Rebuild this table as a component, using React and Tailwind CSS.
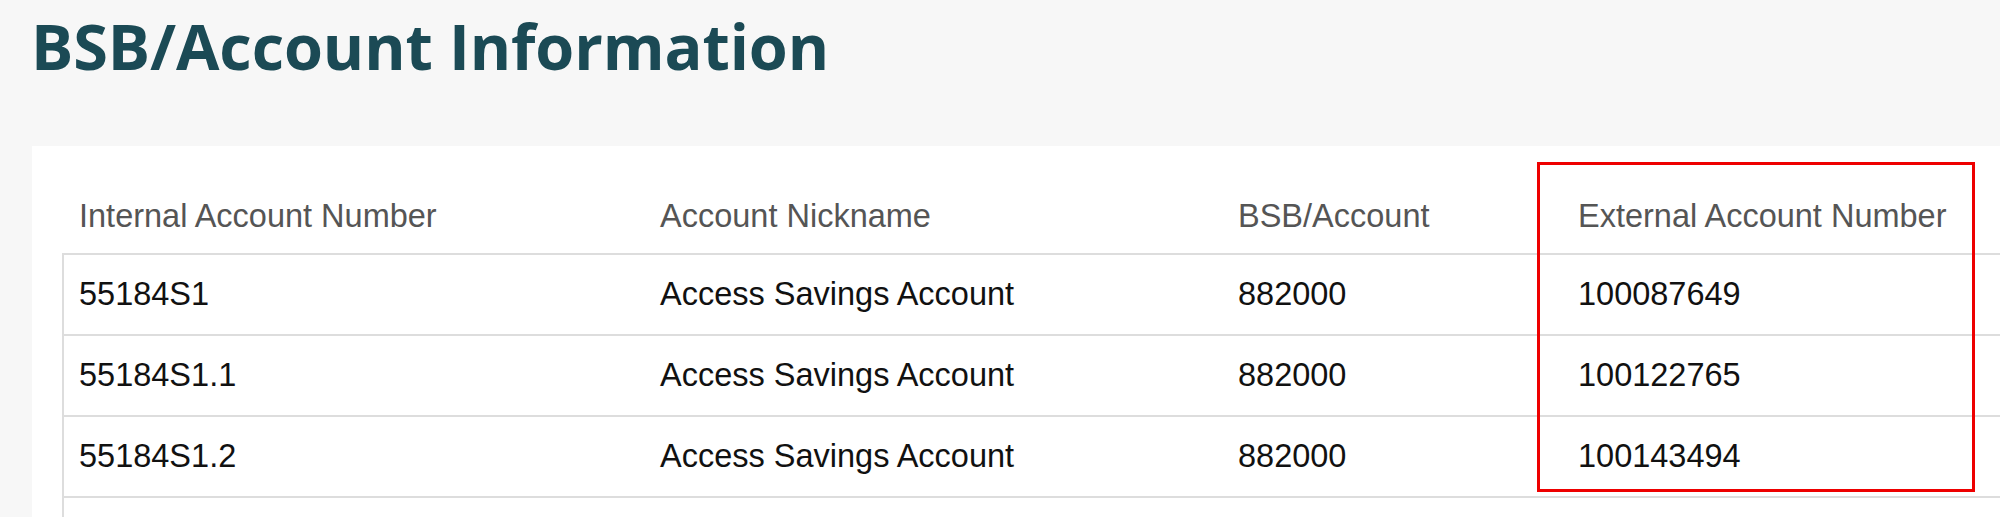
const columns = [
  "Internal Account Number",
  "Account Nickname",
  "BSB/Account",
  "External Account Number",
];

const accounts = [
  { internal: "55184S1", nickname: "Access Savings Account", bsb: "882000", external: "100087649" },
  { internal: "55184S1.1", nickname: "Access Savings Account", bsb: "882000", external: "100122765" },
  { internal: "55184S1.2", nickname: "Access Savings Account", bsb: "882000", external: "100143494" },
];

// column widths follow the original table, last one takes the rest
const gridCols = "grid grid-cols-[581px_578px_340px_1fr]";

export default function App() {
  return (
    <div className="h-[517px] overflow-hidden bg-[#f7f7f7] font-['Liberation_Sans',Arial,sans-serif]">
      {/* Page title */}
      <h1 className="ml-[31px] pt-[14px] h-[146px] font-['Open_Sans',sans-serif] text-[63px] font-bold leading-none tracking-[-0.1px] text-[#1b4a55]">
        BSB/Account Information
      </h1>

      {/* Table card */}
      <div className="relative ml-[32px] h-[400px] bg-white">
        <div className="ml-[30px]">
          {/* Header */}
          <div className={`${gridCols} h-[107px] pt-[33px] border-l-2 border-transparent`}>
            {columns.map((col) => (
              <div key={col} className="flex items-center pl-[15px] text-[32.5px] text-[#555555]">
                {col}
              </div>
            ))}
          </div>

          {/* Rows */}
          {accounts.map((acc) => (
            <div
              key={acc.internal}
              className={`${gridCols} h-[81px] border-t-2 border-l-2 border-[#dddddd] text-[32.5px] text-[#111111]`}
            >
              <div className="flex items-center pl-[15px]">{acc.internal}</div>
              <div className="flex items-center pl-[15px]">{acc.nickname}</div>
              <div className="flex items-center pl-[15px]">{acc.bsb}</div>
              <div className="flex items-center pl-[15px]">{acc.external}</div>
            </div>
          ))}
          <div className="h-[81px] border-t-2 border-l-2 border-[#dddddd]" />
        </div>

        {/* Highlight box around the external account column */}
        <div className="absolute left-[1505px] top-[16px] w-[438px] h-[330px] border-[3px] border-[#ee0000]" />
      </div>
    </div>
  );
}
